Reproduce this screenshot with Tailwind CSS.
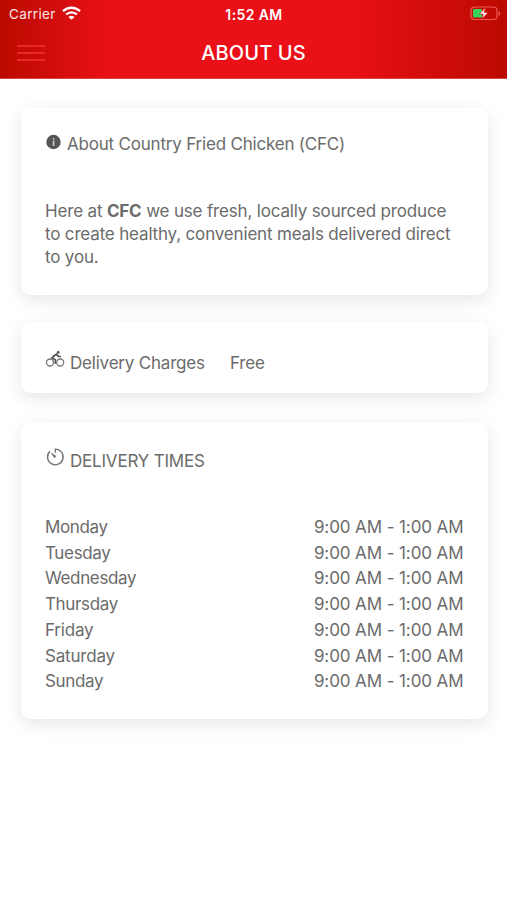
<!DOCTYPE html>
<html lang="en">
  <head>
    <meta charset="UTF-8" />
    <meta name="viewport" content="width=device-width,initial-scale=1.0" />
    <title>About Us</title>
    <script src="https://cdn.jsdelivr.net/npm/@tailwindcss/browser@4"></script>
  </head>
  <body class="min-h-screen bg-white font-['Inter',sans-serif] text-[#6b6b6b] overflow-hidden">
    <!-- Header -->
    <header class="h-[79px] bg-linear-to-r from-[#bb0a00] via-[#ea1018] via-22% to-[#ea1018] border-b border-[#d8463f] text-white">
      <div class="h-full bg-linear-to-r from-transparent from-68% to-[#bb0a00]">
        <!-- Status bar -->
        <div class="grid grid-cols-3 items-center h-7 pl-[7px] pr-[6px] text-[13.5px]">
          <div class="flex items-center gap-[6px] pl-[2px] text-white/90">
            <span class="tracking-[0.35px]">Carrier</span>
            <svg class="w-[19px] h-[14px] -mt-[2px]" viewBox="0 0 19 14" fill="none" stroke="white" stroke-width="2.4">
              <path d="M1 5.2C5.8.6 13.200.6 18 5.200" />
              <path d="M4.100 8.500c3-2.900 7.800-2.900 10.800 0" />
              <path d="M9.500 13.800 6.500 10.900c1.700-1.600 4.300-1.600 6 0Z" fill="white" stroke="none" />
            </svg>
          </div>
          <span class="text-center font-semibold text-[14px] tracking-[0.4px]">1:52 AM</span>
          <svg class="w-[31px] h-[15px] justify-self-end -mt-[2px]" viewBox="0 0 31 15">
            <rect x="1" y="1" width="26" height="12.500" rx="3.500" fill="none" stroke="#ee5b57" stroke-width="1.200" />
            <path d="M28.500 5v5c2.300-.8 2.300-4.200 0-5Z" fill="#ee5b57" />
            <rect x="3" y="3" width="9" height="8.500" rx="1" fill="#35d158" />
            <path d="M15.500 1.500 9.500 8h3.800l-1.500 5L18 6.500h-4Z" fill="white" stroke="#d90f14" stroke-width=".6" />
          </svg>
        </div>
        <!-- Title bar -->
        <div class="grid grid-cols-3 items-center h-[49px] px-[17px]">
          <div class="flex flex-col gap-[5px] w-[28px]">
            <span class="h-[2px] bg-[#e8282b]"></span>
            <span class="h-[2px] bg-[#e8282b]"></span>
            <span class="h-[2px] bg-[#e8282b]"></span>
          </div>
          <h1 class="text-center text-[20px] font-medium tracking-[0.1px] whitespace-nowrap">ABOUT US</h1>
        </div>
      </div>
    </header>

    <main class="flex flex-col pl-[20.5px] pr-[19px] pt-[29px] text-[17px] tracking-[-0.2px]">
      <!-- About -->
      <section class="h-[187px] px-[24.5px] pt-[25px] rounded-[10px] bg-white shadow-[0_5px_18px_rgba(0,0,0,0.1)]">
        <h2 class="flex items-center h-6 gap-[6px]">
          <svg class="w-4 h-4 -mt-[6px]" viewBox="0 0 16 16">
            <circle cx="8.500" cy="8" r="7.200" fill="#555" />
            <path d="M7.800 4h1.600v1.600H7.800ZM7.800 6.500h1.600V12H7.800Z" fill="#ccc" />
          </svg>
          <span>About Country Fried Chicken (CFC)</span>
        </h2>
        <p class="mt-[43px] leading-[23px] tracking-[-0.17px] whitespace-nowrap">
          Here at <b>CFC</b> we use fresh, locally sourced produce<br />
          to create healthy, convenient meals delivered direct<br />
          to you.
        </p>
      </section>

      <!-- Delivery charges -->
      <section class="flex h-[71px] mt-[27px] px-[24.5px] pt-[29px] rounded-[10px] bg-white shadow-[0_5px_18px_rgba(0,0,0,0.1)]">
        <h2 class="flex items-center h-6 gap-[5px] w-[185px]">
          <svg class="w-5 h-[18px] -mt-[8px]" viewBox="0 0 20 18" fill="none" stroke="#777" stroke-width="1.300">
            <circle cx="5" cy="12.500" r="3.500" />
            <circle cx="15.200" cy="12.500" r="3.500" />
            <path d="M13.500 6.500 11 4.500 7 7.800l3.300 1.900v4" stroke="#555" stroke-width="1.600" />
            <path d="m7.500 6.800 4-3 2 2.700H16" stroke="#555" />
            <circle cx="13.200" cy="2.400" r="1.400" fill="#555" stroke="none" />
          </svg>
          <span class="pt-px">Delivery Charges</span>
        </h2>
        <span class="leading-6">Free</span>
      </section>

      <!-- Delivery times -->
      <section class="h-[297px] mt-[29px] px-[24.5px] pt-[27px] rounded-[10px] bg-white shadow-[0_5px_18px_rgba(0,0,0,0.1)]">
        <h2 class="flex items-center h-6 gap-[5px]">
          <svg class="w-5 h-5 -mt-[8px]" viewBox="0 0 20 20" fill="none" stroke="#777" stroke-width="1.400">
            <path d="M5 4.200a7.800 7.800 0 1 0 5.300-2.100v3.700" />
            <path d="m6.300 6 4.700 3.200-1.500 1.600Z" fill="#666" stroke-width=".7" />
          </svg>
          <span class="pt-px">DELIVERY TIMES</span>
        </h2>
        <ul class="mt-[42px] leading-[25.7px]">
          <li class="flex justify-between"><span class="tracking-[-0.35px]">Monday</span><span class="tracking-[-0.1px]">9:00 AM - 1:00 AM</span></li>
          <li class="flex justify-between"><span class="tracking-[-0.35px]">Tuesday</span><span class="tracking-[-0.1px]">9:00 AM - 1:00 AM</span></li>
          <li class="flex justify-between"><span class="tracking-[-0.35px]">Wednesday</span><span class="tracking-[-0.1px]">9:00 AM - 1:00 AM</span></li>
          <li class="flex justify-between"><span class="tracking-[-0.35px]">Thursday</span><span class="tracking-[-0.1px]">9:00 AM - 1:00 AM</span></li>
          <li class="flex justify-between"><span class="tracking-[-0.2px]">Friday</span><span class="tracking-[-0.1px]">9:00 AM - 1:00 AM</span></li>
          <li class="flex justify-between"><span class="tracking-[-0.2px]">Saturday</span><span class="tracking-[-0.1px]">9:00 AM - 1:00 AM</span></li>
          <li class="flex justify-between"><span class="tracking-[-0.35px]">Sunday</span><span class="tracking-[-0.1px]">9:00 AM - 1:00 AM</span></li>
        </ul>
      </section>
    </main>
  </body>
</html>
